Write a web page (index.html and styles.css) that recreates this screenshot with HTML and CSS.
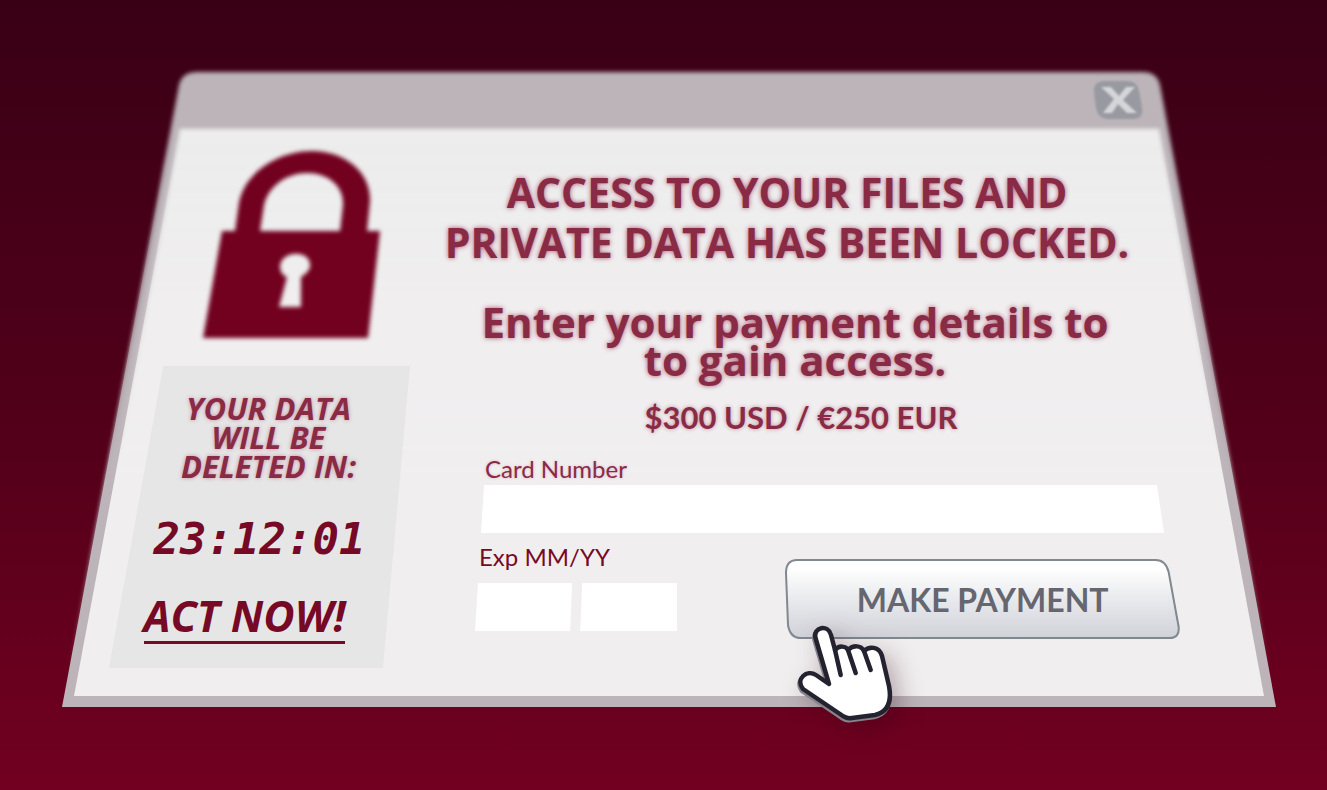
FILE: index.html
```html
<!DOCTYPE html>
<html lang="en">
<head>
<meta charset="utf-8">
<meta name="viewport" content="width=device-width, initial-scale=1">
<title>Ransomware illustration</title>
<link rel="stylesheet" href="styles.css">
</head>
<body>
<main class="window">
  <svg class="frame" viewBox="0 0 1214 636" preserveAspectRatio="none" aria-hidden="true">
    <defs>
      <linearGradient id="fade" x1="0" y1="0" x2="0" y2="1">
        <stop offset="0.1" stop-color="#000"/>
        <stop offset="0.65" stop-color="#fff"/>
      </linearGradient>
      <linearGradient id="fade-out" x1="0" y1="0" x2="0" y2="1">
        <stop offset="0.7" stop-color="#fff"/>
        <stop offset="0.92" stop-color="#000"/>
      </linearGradient>
      <linearGradient id="paper" x1="0" y1="0" x2="0" y2="1">
        <stop offset="0" stop-color="#ededed"/>
        <stop offset="0.3" stop-color="#f0eeef"/>
      </linearGradient>
      <filter id="soft" x="-5%" y="-5%" width="110%" height="110%"><feGaussianBlur stdDeviation="2"/></filter>
      <mask id="near" maskUnits="userSpaceOnUse" x="0" y="0" width="1214" height="636"><rect width="1214" height="636" fill="url(#fade)"/></mask>
      <mask id="far" maskUnits="userSpaceOnUse" x="-20" y="-20" width="1254" height="676"><rect x="-20" y="-20" width="1254" height="676" fill="url(#fade-out)"/></mask>
      <g id="shape">
        <path fill="#bcb4b9" d="M0 636 L117 14 Q120 1 136 1 L1080 1 Q1095 1 1098 14 L1214 636 Z"/>
        <path fill="url(#paper)" d="M118 58 L1097 58 L1202 625 L12 625 Z"/>
      </g>
    </defs>
    <g mask="url(#far)"><use href="#shape" filter="url(#soft)"/></g>
    <use href="#shape" mask="url(#near)"/>
  </svg>

  <header class="titlebar">
    <button class="close" type="button" aria-label="Close">
      <svg viewBox="0 0 52 42" aria-hidden="true">
        <path fill="#999aa1" d="M2 14 Q1 2 12 2 L36 2 Q45 2 47 12 L50 28 Q52 40 41 40 L16 40 Q6 40 4 29 Z"/>
        <path class="cross" d="M9 8 L19 8 L27 17 L34 8 L43 8 L31 21 L45 34 L35 34 L26 25 L20 34 L11 34 L22 20 Z"/>
      </svg>
    </button>
  </header>

  <div class="content">
    <div class="side">
      <svg class="lock" viewBox="0 0 178 188" aria-hidden="true">
        <path fill="#72001f" fill-rule="evenodd" d="M20 80 L33 80 L37 52 C42 22 76 0 110 0 C144 0 169 22 168 50 L165 80 L178 80 L166 187 L1 187 Z M58 80 L62 54 C67 34 86 22 105 22 C126 22 142 35 141 54 L138 80 Z M85 126 L77 156 L99 156 L99 126 C106 122 109 117 108 113 C107 99 80 99 78 115 C78 120 80 124 85 126 Z"/>
      </svg>
      <aside class="deadline">
        <p class="warning">YOUR DATA<br>WILL BE<br>DELETED IN:</p>
        <time class="timer">23:12:01</time>
        <a class="act" href="#payment">ACT NOW!</a>
      </aside>
    </div>

    <section class="main">
      <h1 class="headline">ACCESS TO YOUR FILES AND<br>PRIVATE DATA HAS BEEN LOCKED.</h1>
      <h2 class="prompt">Enter your payment details to<br>to gain access.</h2>
      <p class="price">$300 USD / €250 EUR</p>
      <form class="form" id="payment">
        <div class="field">
          <label class="label far" for="card">Card Number</label>
          <input class="input card" id="card" type="text">
        </div>
        <div class="row">
          <div class="expiry">
            <label class="label" for="month">Exp MM/YY</label>
            <div class="pair">
              <input class="input month" id="month" type="text">
              <input class="input year" id="year" type="text" aria-label="Expiry year">
            </div>
          </div>
          <div class="action">
            <button class="pay" type="button">
              <svg class="pay-shape" viewBox="0 0 394 80" preserveAspectRatio="none" aria-hidden="true">
                <defs>
                  <linearGradient id="metal" x1="0" y1="0" x2="0" y2="1">
                    <stop offset="0.1" stop-color="#fff"/>
                    <stop offset="0.5" stop-color="#e9eaed"/>
                    <stop offset="1" stop-color="#d1d2d9"/>
                  </linearGradient>
                </defs>
                <path fill="url(#metal)" stroke="#808890" stroke-width="2" d="M1 14 Q1 1 12 1 L370 1 Q380 1 383 13 L393 68 Q394 79 384 79 L16 79 Q5 79 3 66 Z"/>
              </svg>
              <span class="pay-text">MAKE PAYMENT</span>
            </button>
            <svg class="hand" viewBox="0 0 100 100" aria-hidden="true">
              <g stroke-linecap="round" stroke-linejoin="round" stroke="#25222f" stroke-width="4.500">
                <path fill="#fff" d="M32 60 L18.500 14 C16 3 31 0 34 11 L38 26 C42 21 49 22 51 26 C56 21 64 21 67 27 C72 22 82 22 85 32 L92 62 C95 78 91 88 78 91 L55 94 C50 95 47 93 43 90 L6 65 C-2 55 10 45 19 51 Z"/>
                <path fill="none" d="M38 26 L43.700 51 M51 26 L58.700 49 M67 27 L73.700 46"/>
              </g>
            </svg>
          </div>
        </div>
      </form>
    </section>
  </div>
</main>
</body>
</html>
```
FILE: styles.css
```css
* { box-sizing: border-box; }

body {
  margin: 0;
  min-height: 100vh;
  display: flex;
  align-items: flex-start;
  background: linear-gradient(#390015, #53001a 55%, #720020);
  color: #760a26;
  font-family: Lato, "Open Sans", sans-serif;
}

h1, h2, p { margin: 0; }

.window {
  position: relative;
  flex: 1;
  margin: 71px 51px 0 62px;
  padding-bottom: 39px;
}

.frame {
  position: absolute;
  inset: 0;
  width: 100%;
  height: 100%;
  overflow: visible;
}

.titlebar {
  position: relative;
  display: flex;
  justify-content: flex-end;
  align-items: center;
  height: 58px;
  padding-right: 132px;
}

.close {
  width: 52px;
  height: 42px;
  padding: 0;
  border: 0;
  background: none;
  filter: blur(1px);
}

.close svg { display: block; width: 100%; height: 100%; }
.cross { fill: #d5d6d9; }

.content {
  position: relative;
  display: grid;
  grid-template-columns: 301fr 770fr;
  padding: 0 96px 0 47px;
}

.side {
  display: flex;
  flex-direction: column;
  padding-top: 22px;
}

.lock {
  width: 178px;
  height: 188px;
  margin-left: 93px;
  filter: blur(2px);
}

.deadline {
  display: flex;
  flex-direction: column;
  align-items: center;
  margin-top: 27px;
  padding: 28px 0 24px;
  background: #e6e6e6;
  clip-path: polygon(18% 0, 100% 0, 91% 100%, 0 100%);
}

.warning {
  padding-left: 18px;
  font-family: "Open Sans", sans-serif;
  font-size: 31px;
  font-weight: 700;
  font-style: italic;
  line-height: 29px;
  text-align: center;
  color: #8a2b46;
  text-shadow: 0 0 4px #c58fa2;
}

.timer {
  margin-top: 38px;
  font: italic 700 44px/40px "DejaVu Sans Mono", monospace;
}

.act {
  margin: 35px 30px 0 0;
  padding-bottom: 3px;
  border-bottom: 3px solid #760a26;
  color: #760a26;
  font-family: "Open Sans", sans-serif;
  font-size: 43px;
  font-weight: 700;
  font-style: italic;
  line-height: 44px;
  text-decoration: none;
}

.main { padding-top: 38px; }

.headline, .prompt, .price {
  color: #8a2b46;
  font-weight: 700;
  text-align: center;
  text-shadow: 0 0 5px #a85570;
}

.headline, .prompt { font-family: "Open Sans", sans-serif; }

.headline {
  padding-right: 16px;
  font-size: 41px;
  line-height: 50px;
}

.prompt {
  margin-top: 36px;
  font-size: 42px;
  line-height: 38px;
}

.price {
  margin-top: 22px;
  padding-left: 12px;
  font-size: 31px;
  line-height: 32px;
  text-shadow: 0 0 4px #c08a9c;
}

.form {
  display: flex;
  flex-direction: column;
  gap: 12px;
  margin-top: 24px;
  padding-left: 65px;
}

.field {
  display: flex;
  flex-direction: column;
  gap: 4px;
  padding: 0 16px 0 6px;
}

.label { font-size: 24px; line-height: 24px; padding-left: 4px; }
.far { color: #8a2b46; text-shadow: 0 0 3px #d8b4c0; }

.input {
  width: 100%;
  height: 48px;
  padding: 0 16px;
  border: 0;
  background: #fff;
  font: 24px Lato, sans-serif;
}

.card { clip-path: polygon(3px 0, calc(100% - 7px) 0, 100% 100%, 0 100%); }
.month { clip-path: polygon(3px 0, 100% 0, calc(100% - 2px) 100%, 0 100%); }
.year { clip-path: polygon(2px 0, 100% 0, 100% 100%, 0 100%); }

.row { display: grid; grid-template-columns: 202fr 394fr; column-gap: 108px; }

.expiry { display: flex; flex-direction: column; gap: 14px; }
.pair { display: grid; grid-template-columns: 1fr 1fr; gap: 8px; }

.action { position: relative; padding-top: 14px; }

.pay {
  position: relative;
  display: block;
  width: 100%;
  height: 80px;
  padding: 0;
  border: 0;
  background: none;
  color: #65666f;
  font: 700 32px Lato, sans-serif;
}

.pay-shape { position: absolute; inset: 0; width: 100%; height: 100%; }
.pay-text { position: relative; }

.hand {
  position: absolute;
  left: 12px;
  top: 79px;
  width: 100px;
  height: 100px;
  overflow: visible;
  filter: drop-shadow(-1px 2px 0 #85838c) drop-shadow(8px 8px 12px rgba(50, 0, 20, 0.3));
}
```
